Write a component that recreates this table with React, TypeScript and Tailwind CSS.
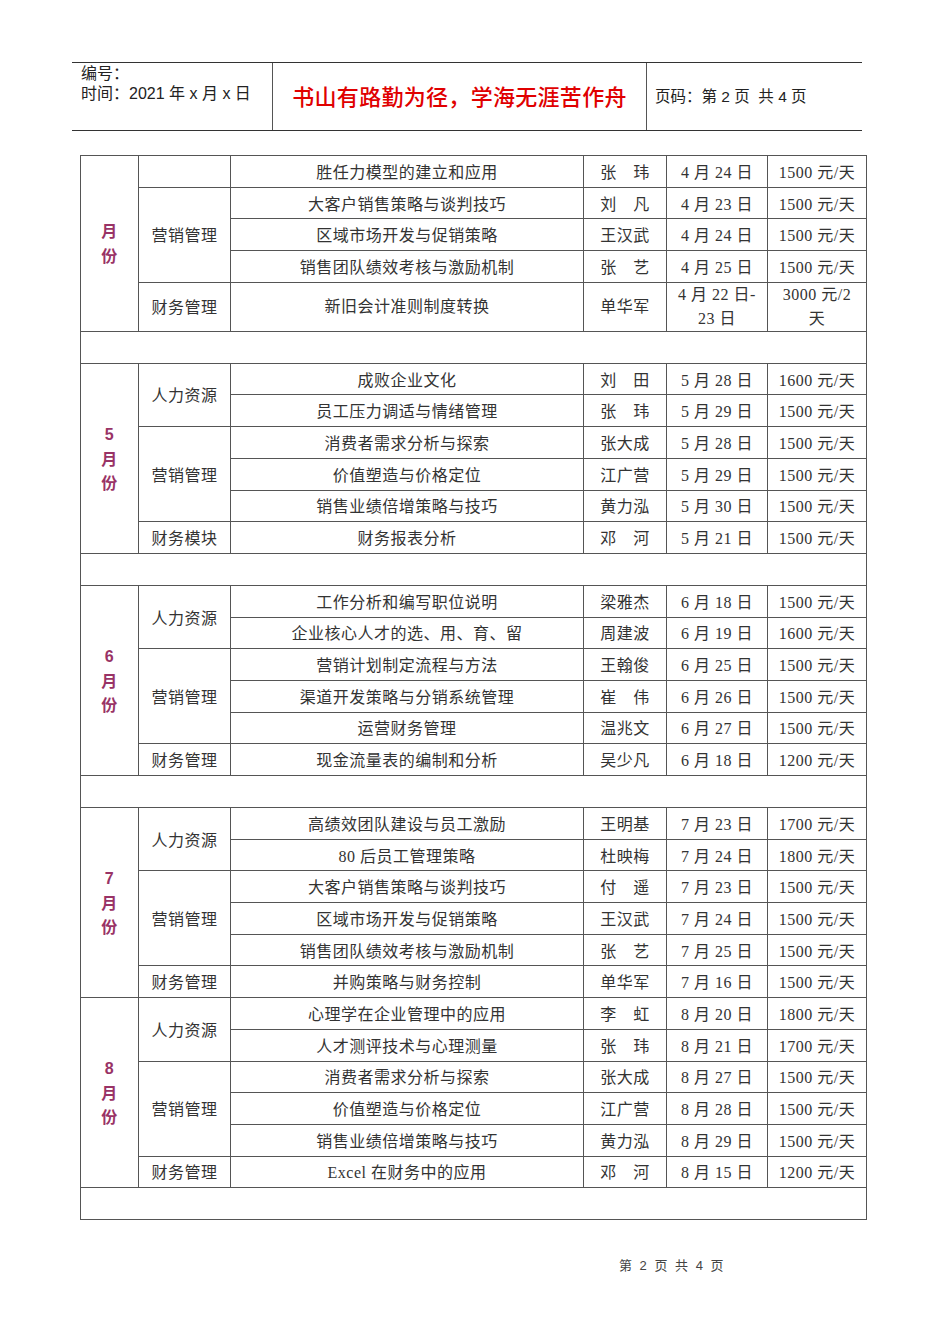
type Course = { title: string; teacher: string; date: string; price: string; tall?: boolean };
type Group = { category: string; courses: Course[] };
type Month = { label: string[]; groups: Group[]; spacerAfter: boolean };

const c = (title: string, teacher: string, date: string, price: string, tall?: boolean): Course => ({
  title,
  teacher,
  date,
  price,
  tall,
});

const MONTHS: Month[] = [
  {
    label: ['月', '份'],
    spacerAfter: true,
    groups: [
      { category: '', courses: [c('胜任力模型的建立和应用', '张　玮', '4 月 24 日', '1500 元/天')] },
      {
        category: '营销管理',
        courses: [
          c('大客户销售策略与谈判技巧', '刘　凡', '4 月 23 日', '1500 元/天'),
          c('区域市场开发与促销策略', '王汉武', '4 月 24 日', '1500 元/天'),
          c('销售团队绩效考核与激励机制', '张　艺', '4 月 25 日', '1500 元/天'),
        ],
      },
      {
        category: '财务管理',
        courses: [c('新旧会计准则制度转换', '单华军', '4 月 22 日-\n23 日', '3000 元/2\n天', true)],
      },
    ],
  },
  {
    label: ['5', '月', '份'],
    spacerAfter: true,
    groups: [
      {
        category: '人力资源',
        courses: [
          c('成败企业文化', '刘　田', '5 月 28 日', '1600 元/天'),
          c('员工压力调适与情绪管理', '张　玮', '5 月 29 日', '1500 元/天'),
        ],
      },
      {
        category: '营销管理',
        courses: [
          c('消费者需求分析与探索', '张大成', '5 月 28 日', '1500 元/天'),
          c('价值塑造与价格定位', '江广营', '5 月 29 日', '1500 元/天'),
          c('销售业绩倍增策略与技巧', '黄力泓', '5 月 30 日', '1500 元/天'),
        ],
      },
      { category: '财务模块', courses: [c('财务报表分析', '邓　河', '5 月 21 日', '1500 元/天')] },
    ],
  },
  {
    label: ['6', '月', '份'],
    spacerAfter: true,
    groups: [
      {
        category: '人力资源',
        courses: [
          c('工作分析和编写职位说明', '梁雅杰', '6 月 18 日', '1500 元/天'),
          c('企业核心人才的选、用、育、留', '周建波', '6 月 19 日', '1600 元/天'),
        ],
      },
      {
        category: '营销管理',
        courses: [
          c('营销计划制定流程与方法', '王翰俊', '6 月 25 日', '1500 元/天'),
          c('渠道开发策略与分销系统管理', '崔　伟', '6 月 26 日', '1500 元/天'),
          c('运营财务管理', '温兆文', '6 月 27 日', '1500 元/天'),
        ],
      },
      { category: '财务管理', courses: [c('现金流量表的编制和分析', '吴少凡', '6 月 18 日', '1200 元/天')] },
    ],
  },
  {
    label: ['7', '月', '份'],
    spacerAfter: false,
    groups: [
      {
        category: '人力资源',
        courses: [
          c('高绩效团队建设与员工激励', '王明基', '7 月 23 日', '1700 元/天'),
          c('80 后员工管理策略', '杜映梅', '7 月 24 日', '1800 元/天'),
        ],
      },
      {
        category: '营销管理',
        courses: [
          c('大客户销售策略与谈判技巧', '付　遥', '7 月 23 日', '1500 元/天'),
          c('区域市场开发与促销策略', '王汉武', '7 月 24 日', '1500 元/天'),
          c('销售团队绩效考核与激励机制', '张　艺', '7 月 25 日', '1500 元/天'),
        ],
      },
      { category: '财务管理', courses: [c('并购策略与财务控制', '单华军', '7 月 16 日', '1500 元/天')] },
    ],
  },
  {
    label: ['8', '月', '份'],
    spacerAfter: true,
    groups: [
      {
        category: '人力资源',
        courses: [
          c('心理学在企业管理中的应用', '李　虹', '8 月 20 日', '1800 元/天'),
          c('人才测评技术与心理测量', '张　玮', '8 月 21 日', '1700 元/天'),
        ],
      },
      {
        category: '营销管理',
        courses: [
          c('消费者需求分析与探索', '张大成', '8 月 27 日', '1500 元/天'),
          c('价值塑造与价格定位', '江广营', '8 月 28 日', '1500 元/天'),
          c('销售业绩倍增策略与技巧', '黄力泓', '8 月 29 日', '1500 元/天'),
        ],
      },
      { category: '财务管理', courses: [c('Excel 在财务中的应用', '邓　河', '8 月 15 日', '1200 元/天')] },
    ],
  },
];

const SERIF = "font-['Liberation_Serif','Noto_Sans_CJK_SC',serif]";
const SANS = "font-['Liberation_Sans','Noto_Sans_CJK_SC',sans-serif]";
const CELL = 'border border-[#555] px-0 pb-0 text-center align-middle';

function Header() {
  return (
    <div className={`ml-[72px] mt-[62px] flex h-[69px] w-[790px] border-y border-[#333] text-[#222] ${SANS}`}>
      <div className="w-[201px] border-r border-[#555] pl-[9px] pt-[1px] text-[16px] leading-[20px]">
        <p>编号：</p>
        <p>时间：2021 年 x 月 x 日</p>
      </div>
      <div className="flex w-[374px] items-center justify-center border-r border-[#555] pt-[1px]">
        <span className="text-[22px] font-medium tracking-[0.3px] text-[#e00000]">书山有路勤为径，学海无涯苦作舟</span>
      </div>
      <div className="flex flex-1 items-center pl-[8px] pt-[1px] text-[15.5px]">
        <span>页码：第 2 页&nbsp; 共 4 页</span>
      </div>
    </div>
  );
}

function MonthRows({ month }: { month: Month }) {
  const total = month.groups.reduce((n, g) => n + g.courses.length, 0);
  const rows: React.ReactNode[] = [];
  month.groups.forEach((group, gi) => {
    group.courses.forEach((course, ci) => {
      const pad = course.tall ? 'pt-0' : 'pt-[3px]';
      rows.push(
        <tr key={`${gi}-${ci}`} className={course.tall ? 'h-[49px]' : 'h-[31.7px]'}>
          {gi === 0 && ci === 0 && (
            <td
              rowSpan={total}
              className={`${CELL} pt-[3px] ${SANS} text-[16px] font-bold leading-[24.5px] text-[#993366]`}
            >
              {month.label.map((ch) => (
                <div key={ch}>{ch}</div>
              ))}
            </td>
          )}
          {ci === 0 && (
            <td rowSpan={group.courses.length} className={`${CELL} pt-[3px]`}>
              {group.category}
            </td>
          )}
          <td className={`${CELL} ${pad}`}>{course.title}</td>
          <td className={`${CELL} ${pad}`}>{course.teacher}</td>
          <td className={`${CELL} ${pad} whitespace-pre-line leading-[24px]`}>{course.date}</td>
          <td className={`${CELL} ${pad} whitespace-pre-line leading-[24px]`}>{course.price}</td>
        </tr>,
      );
    });
  });
  if (month.spacerAfter) {
    rows.push(
      <tr key="spacer" className="h-[32px]">
        <td colSpan={6} className={`${CELL} pt-0`}></td>
      </tr>,
    );
  }
  return <>{rows}</>;
}

export default function App() {
  return (
    <div className="min-h-[1344px] w-[950px] bg-white">
      <Header />
      <table
        className={`mx-[80px] mt-[24px] w-[786px] table-fixed border-collapse text-[16px] tracking-[0.5px] text-[#333] ${SERIF}`}
      >
        <colgroup>
          <col className="w-[58px]" />
          <col className="w-[92px]" />
          <col className="w-[353px]" />
          <col className="w-[83px]" />
          <col className="w-[101px]" />
          <col className="w-[99px]" />
        </colgroup>
        <tbody>
          {MONTHS.map((m, i) => (
            <MonthRows key={i} month={m} />
          ))}
        </tbody>
      </table>
      <p className={`mt-[36px] pl-[619px] text-[13px] tracking-[1px] [word-spacing:2px] text-[#444] ${SANS}`}>
        第 2 页 共 4 页
      </p>
    </div>
  );
}
